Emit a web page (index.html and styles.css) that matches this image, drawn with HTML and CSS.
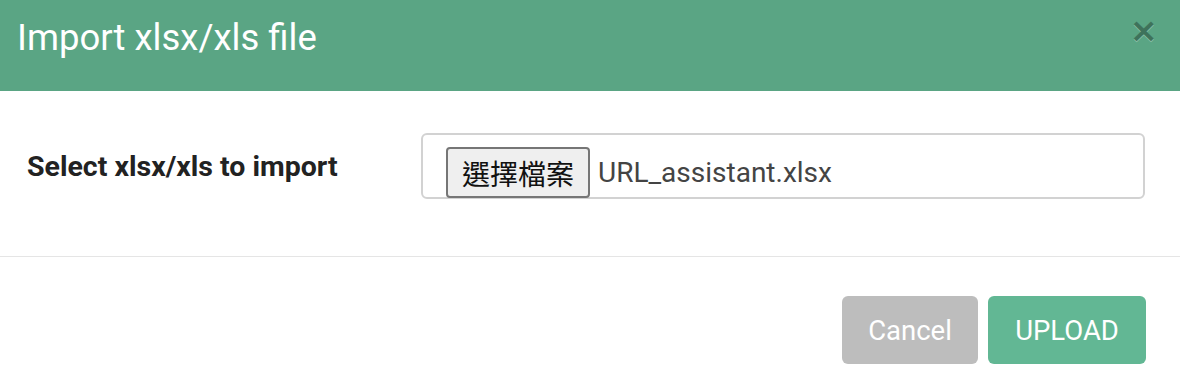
FILE: index.html
```html
<!DOCTYPE html>
<html lang="en">
  <head>
    <meta charset="UTF-8" />
    <meta name="viewport" content="width=device-width, initial-scale=1.0" />
    <title>Import xlsx/xls file</title>
    <link rel="stylesheet" href="styles.css">
  </head>
  <body>
    <div class="modal">
      <div class="modal-header">
        <h2 class="modal-title">Import xlsx/xls file</h2>
        <button class="close" type="button">&times;</button>
      </div>

      <div class="modal-body">
        <label class="field-label">Select xlsx/xls to import</label>
        <div class="file-field">
          <button class="file-btn" type="button">選擇檔案</button>
          <span class="file-name">URL_assistant.xlsx</span>
        </div>
      </div>

      <div class="modal-footer">
        <button class="btn btn-cancel" type="button">Cancel</button>
        <button class="btn btn-upload" type="button">UPLOAD</button>
      </div>
    </div>
  </body>
</html>
```

FILE: styles.css
```css
body {
  margin: 0;
  font-family: Roboto, "Noto Sans", sans-serif;
  background-color: #fff;
  color: #222;
}
.modal {
  width: 1180px;
}
.modal-header {
  height: 91px;
  box-sizing: border-box;
  padding: 0 17px;
  background-color: #5aa584;
  display: flex;
  justify-content: space-between;
  align-items: flex-start;
}
.modal-title {
  margin: 0;
  padding-top: 16px;
  font-size: 36.5px;
  line-height: 44px;
  font-weight: 400;
  color: #fff;
}
.close {
  margin-top: 13px;
  margin-right: 5px;
  padding: 0;
  border: none;
  background: none;
  font-family: "DejaVu Sans", sans-serif;
  font-size: 34px;
  font-weight: 700;
  line-height: 1;
  color: #000;
  opacity: 0.3;
  text-shadow: 0 1px 0 #fff;
  cursor: pointer;
}
.modal-body {
  display: grid;
  grid-template-columns: 394px 1fr;
  align-items: center;
  padding: 42px 35px 57px 27px;
}
.field-label {
  font-size: 28.5px;
  font-weight: 700;
  color: #222;
}
.file-field {
  height: 66px;
  box-sizing: border-box;
  border: 2px solid #d2d2d2;
  border-radius: 6px;
  padding: 12px 0 0 23px;
  display: flex;
  align-items: flex-start;
  gap: 8px;
}
.file-btn {
  width: 144px;
  height: 51px;
  box-sizing: border-box;
  border: 2px solid #767676;
  border-radius: 4px;
  background-color: #efefef;
  font-family: "Noto Sans CJK TC", sans-serif;
  font-size: 28px;
  line-height: 1;
  color: #111;
  padding: 0;
}
.file-name {
  font-size: 28px;
  color: #444;
  line-height: 51px;
}
.modal-footer {
  border-top: 1px solid #e5e5e5;
  padding: 39px 34px 8px;
  display: flex;
  justify-content: flex-end;
  gap: 10px;
}
.btn {
  height: 68px;
  border: none;
  border-radius: 6px;
  font-family: Roboto, sans-serif;
  font-size: 27.5px;
  color: #fff;
  cursor: pointer;
}
.btn-cancel {
  width: 136px;
  background-color: #bdbdbd;
}
.btn-upload {
  width: 158px;
  background-color: #62b794;
}
```
